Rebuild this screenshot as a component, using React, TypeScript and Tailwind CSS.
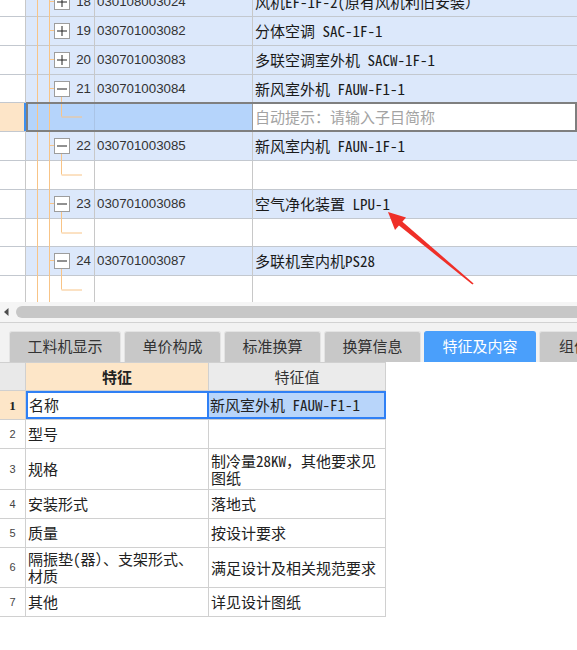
import React from "react";

type GridRow =
  | { kind: "main"; h: string; num: string; code: string; name: string; open: boolean }
  | { kind: "child"; h: string }
  | { kind: "edit"; h: string };

const rows: GridRow[] = [
  { kind: "main", h: "h-[29px]", num: "18", code: "030108003024", name: "风机EF-1F-2(原有风机利旧安装）", open: false },
  { kind: "main", h: "h-[29px]", num: "19", code: "030701003082", name: "分体空调 SAC-1F-1", open: false },
  { kind: "main", h: "h-[29px]", num: "20", code: "030701003083", name: "多联空调室外机 SACW-1F-1", open: false },
  { kind: "main", h: "h-[28px]", num: "21", code: "030701003084", name: "新风室外机 FAUW-F1-1", open: true },
  { kind: "edit", h: "h-[29px]" },
  { kind: "main", h: "h-[29px]", num: "22", code: "030701003085", name: "新风室内机 FAUN-1F-1", open: true },
  { kind: "child", h: "h-[29px]" },
  { kind: "main", h: "h-[29px]", num: "23", code: "030701003086", name: "空气净化装置 LPU-1", open: true },
  { kind: "child", h: "h-[28px]" },
  { kind: "main", h: "h-[29px]", num: "24", code: "030701003087", name: "多联机室内机PS28", open: true },
  { kind: "child", h: "h-[29px]" },
];

const features = [
  { n: "2", h: "h-[29px]", k: ["型号"], v: [] as string[] },
  { n: "3", h: "h-[41px]", k: ["规格"], v: ["制冷量28KW，其他要求见", "图纸"] },
  { n: "4", h: "h-[29px]", k: ["安装形式"], v: ["落地式"] },
  { n: "5", h: "h-[29px]", k: ["质量"], v: ["按设计要求"] },
  { n: "6", h: "h-[40px]", k: ["隔振垫(器）、支架形式、", "材质"], v: ["满足设计及相关规范要求"] },
  { n: "7", h: "h-[29px]", k: ["其他"], v: ["详见设计图纸"] },
];

const tabs = [
  { label: "工料机显示", w: "w-[112px]" },
  { label: "单价构成", w: "w-[97px]" },
  { label: "标准换算", w: "w-[97px]" },
  { label: "换算信息", w: "w-[97px]" },
  { label: "特征及内容", w: "w-[112px]", active: true },
  { label: "组价内容", w: "w-[100px]" },
];

const LINE = "#f8c487";
const MONO = "font-['Noto_Sans_Mono_CJK_SC','Noto_Sans_CJK_SC',monospace]";

// tree connectors drawn in the second column
function TreeGlyph({ kind, open, tall }: { kind: "main" | "child"; open?: boolean; tall: number }) {
  const mid = 13.5;
  return (
    <svg className="absolute left-0 top-0" width={68} height={tall}>
      <line x1={11.5} y1={0} x2={11.5} y2={tall} stroke={LINE} />
      <line x1={23.5} y1={0} x2={23.5} y2={tall} stroke={LINE} />
      {kind === "main" ? (
        <>
          <line x1={23.5} y1={mid} x2={28} y2={mid} stroke={LINE} />
          {open && <line x1={35.5} y1={mid + 7} x2={35.5} y2={tall} stroke={LINE} />}
          <rect x={28.5} y={mid - 7} width={15} height={15} fill="#fff" stroke="#9d9d9d" />
          <line x1={31} y1={mid + 0.5} x2={41} y2={mid + 0.5} stroke="#222" />
          {!open && <line x1={36} y1={mid - 4.5} x2={36} y2={mid + 5.5} stroke="#222" />}
        </>
      ) : (
        <>
          <line x1={35.5} y1={0} x2={35.5} y2={mid} stroke={LINE} />
          <line x1={35.5} y1={mid + 0.5} x2={56} y2={mid + 0.5} stroke={LINE} />
        </>
      )}
    </svg>
  );
}

function GridLine({ row }: { row: GridRow }) {
  const tall = row.h === "h-[28px]" ? 28 : 29;
  if (row.kind === "main") {
    return (
      <div className={`flex border-b border-[#c3c8cf] ${row.h}`}>
        <div className="w-[26px] shrink-0 bg-white border-r border-[#c8c8c8]" />
        <div className="relative w-[69px] shrink-0 bg-[#dce8fb] border-r border-[#c8c8c8] flex items-center justify-end pr-[3px]">
          <TreeGlyph kind="main" open={row.open} tall={tall} />
          <span className="relative font-['Liberation_Sans',sans-serif] text-[13.3px] text-[#333]">{row.num}</span>
        </div>
        <div className="w-[158px] shrink-0 bg-[#dce8fb] border-r border-[#c8c8c8] flex items-center pl-[2px] font-['Liberation_Sans',sans-serif] text-[13.3px] text-[#333]">
          {row.code}
        </div>
        <div className={`flex-1 bg-[#dce8fb] flex items-center pl-[2px] pb-[1px] text-[15px] leading-[17px] text-[#1a1a1a] whitespace-nowrap ${MONO}`}>
          {row.name}
        </div>
      </div>
    );
  }
  if (row.kind === "child") {
    return (
      <div className={`flex border-b border-[#c3c8cf] ${row.h}`}>
        <div className="w-[26px] shrink-0 bg-white border-r border-[#c8c8c8]" />
        <div className="relative w-[69px] shrink-0 bg-white border-r border-[#c8c8c8]">
          <TreeGlyph kind="child" tall={tall} />
        </div>
        <div className="w-[158px] shrink-0 bg-white border-r border-[#c8c8c8]" />
        <div className="flex-1 bg-white" />
      </div>
    );
  }
  return (
    <div className={`relative flex border-b border-[#c3c8cf] ${row.h}`}>
      <div className="w-[26px] shrink-0 bg-[#fde5c8] border-r-2 border-[#3b8ff0]" />
      <div className="relative w-[69px] shrink-0 bg-[#b5d4fb] border-r border-[#aac4e6]">
        <TreeGlyph kind="child" tall={tall} />
      </div>
      <div className="w-[158px] shrink-0 bg-[#b5d4fb] border-r border-[#9a9a9a]" />
      <div className="flex-1 bg-white flex items-center pl-[2px] pb-[1px] font-['Noto_Sans_CJK_SC',sans-serif] text-[15px] leading-[17px] text-[#a3a3a3]">
        自动提示：请输入子目简称
      </div>
      <div className="absolute left-[26px] right-0 top-[-1px] bottom-[-1px] border-2 border-[#7f7f7f] pointer-events-none" />
    </div>
  );
}

export default function App() {
  return (
    <div className="relative w-[577px] h-[650px] overflow-hidden bg-white">
      {/* upper tree grid */}
      <div className="h-[302px] overflow-hidden">
        <div className="-mt-[12px]">
          {rows.map((r, i) => (
            <GridLine key={i} row={r} />
          ))}
        </div>
      </div>

      {/* horizontal scrollbar */}
      <div className="h-[21px] bg-[#f5f5f5] border-b border-[#d2d2d2] flex items-center pl-[4px] gap-[7px] pb-[1px]">
        <svg width={5} height={8} className="shrink-0">
          <path d="M4.5 0 L0 4 L4.5 8 Z" fill="#4d4d4d" />
        </svg>
        <div className="flex-1 h-[12px] rounded-l-full bg-[#c7c7c7]" />
      </div>

      {/* tabs */}
      <div className="h-[39px] bg-[#f2f2f2] flex items-end pl-[9px] gap-[3px] overflow-hidden">
        {tabs.map((t) => (
          <div
            key={t.label}
            className={`${t.w} shrink-0 h-[31px] pb-[3px] rounded-t-[3px] border border-b-0 flex items-center justify-center font-['Noto_Sans_CJK_SC',sans-serif] text-[15px] leading-none whitespace-nowrap ${
              t.active ? "bg-[#4a9ffb] border-[#4a9ffb] text-white" : "bg-[#c8c8c8] border-[#e3e3e3] text-[#333]"
            }`}
          >
            {t.label}
          </div>
        ))}
      </div>

      {/* feature table */}
      <div className={`w-[386px] border-t border-[#d0d0d0] text-[15px] leading-[17px] text-[#222] ${MONO}`}>
        <div className="flex h-[28px] border-b border-[#d0d0d0]">
          <div className="w-[26px] shrink-0 bg-[#e9e9e9] border-r border-[#d0d0d0]" />
          <div className="w-[183px] shrink-0 bg-[#fde6c8] border-r border-[#d0d0d0] flex items-center justify-center font-bold pb-[1px]">
            特征
          </div>
          <div className="w-[177px] shrink-0 bg-[#ebebeb] border-r border-[#d0d0d0] flex items-center justify-center text-[#333] pb-[1px]">
            特征值
          </div>
        </div>
        <div className="flex h-[29px] border-b border-[#d0d0d0]">
          <div className="w-[26px] shrink-0 bg-[#fde6c8] border-r border-[#d0d0d0] flex items-center justify-center font-['Liberation_Serif',serif] font-bold text-[13px]">
            1
          </div>
          <div className="w-[183px] shrink-0 bg-white border-2 border-[#2f80f5] flex items-center pl-[1px] pb-[1px]">名称</div>
          <div className="w-[177px] shrink-0 bg-[#b8d5fa] border-2 border-l-0 border-[#2f80f5] flex items-center pl-[1px] pb-[1px] whitespace-nowrap">
            新风室外机 FAUW-F1-1
          </div>
        </div>
        {features.map((f) => (
          <div key={f.n} className={`flex ${f.h} border-b border-[#d0d0d0]`}>
            <div className="w-[26px] shrink-0 bg-white border-r border-[#d0d0d0] flex items-center justify-center font-['Liberation_Sans',sans-serif] text-[11px] text-[#444]">
              {f.n}
            </div>
            <div className="w-[183px] shrink-0 border-r border-[#d0d0d0] flex flex-col justify-center pl-[2px] pb-[1px] whitespace-nowrap">
              {f.k.map((s) => (
                <span key={s}>{s}</span>
              ))}
            </div>
            <div className="w-[177px] shrink-0 border-r border-[#d0d0d0] flex flex-col justify-center pl-[2px] pb-[1px] whitespace-nowrap">
              {f.v.map((s) => (
                <span key={s}>{s}</span>
              ))}
            </div>
          </div>
        ))}
      </div>

      {/* red annotation arrow */}
      <svg className="absolute left-0 top-0 pointer-events-none" width={577} height={650}>
        <polygon points="473.6,283.4 472.4,284.6 398.4,224.9 401.6,221.1" fill="#ef2f28" />
        <polygon points="388,212 406,217.5 395,230" fill="#ef2f28" />
      </svg>
    </div>
  );
}
